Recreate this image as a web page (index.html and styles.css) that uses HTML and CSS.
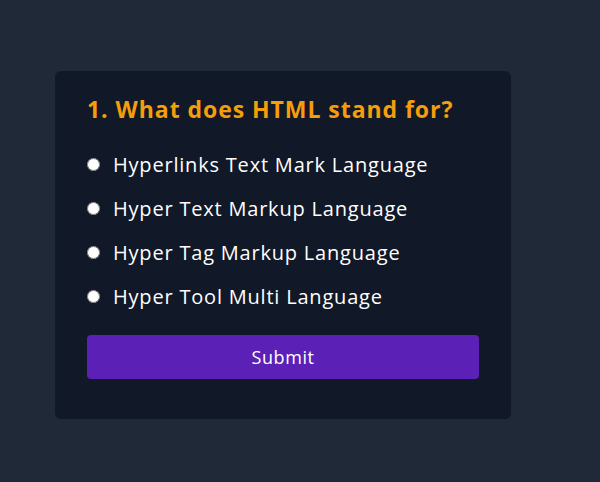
FILE: index.html
```html
<!DOCTYPE html>
<html>
<head>
<meta charset="utf-8">
<link rel="stylesheet" href="styles.css">
</head>
<body>
<div class="card">
  <h2 class="question">1. What does HTML stand for?</h2>
  <ul class="answers">
    <li><label class="answer"><input type="radio" name="q" class="radio"><span>Hyperlinks Text Mark Language</span></label></li>
    <li><label class="answer"><input type="radio" name="q" class="radio"><span>Hyper Text Markup Language</span></label></li>
    <li><label class="answer"><input type="radio" name="q" class="radio"><span>Hyper Tag Markup Language</span></label></li>
    <li><label class="answer"><input type="radio" name="q" class="radio"><span>Hyper Tool Multi Language</span></label></li>
  </ul>
  <button class="submit">Submit</button>
</div>
</body>
</html>
```
FILE: styles.css
```css
html, body {
  margin: 0;
  padding: 0;
}
body {
  background: #1f2937;
  font-family: "Open Sans", "DejaVu Sans", sans-serif;
  color: #fff;
  height: 482px;
  padding: 71px 0 0 55px;
  box-sizing: border-box;
}
.card {
  width: 456px;
  box-sizing: border-box;
  background: #111827;
  border-radius: 6px;
  padding: 22px 32px 40px;
}
.question {
  margin: 0;
  color: #f59e0b;
  font-size: 23px;
  font-weight: 700;
  line-height: 32px;
  letter-spacing: 0.95px;
}
.answers {
  list-style: none;
  margin: 17px 0 0;
  padding: 0;
}
.answers li {
  height: 44px;
  display: flex;
  align-items: center;
}
.answer {
  display: flex;
  align-items: center;
  gap: 13px;
  font-size: 20px;
  letter-spacing: 0.8px;
  cursor: pointer;
}
.radio {
  margin: 0;
  width: 13px;
  height: 13px;
}
.submit {
  display: block;
  margin-top: 17px;
  width: 100%;
  height: 44px;
  border: 0;
  border-radius: 4px;
  background: #5b21b6;
  color: #fff;
  font-family: inherit;
  font-size: 18px;
  letter-spacing: 0.6px;
}
```
